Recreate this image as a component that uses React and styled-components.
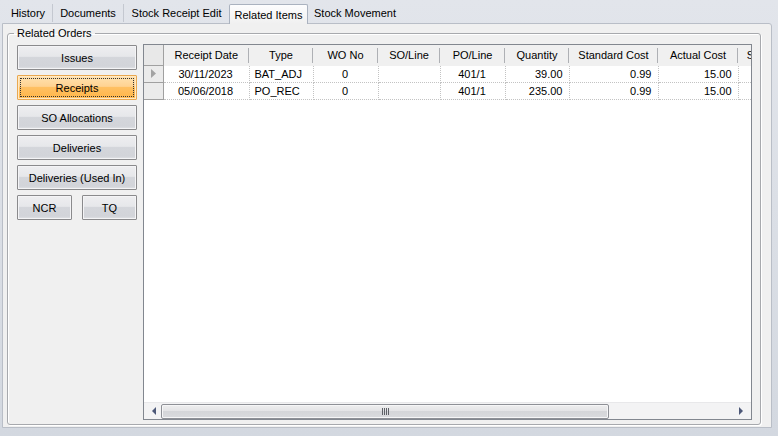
import React from "react";
import styled, { createGlobalStyle, css } from "styled-components";

const GlobalStyle = createGlobalStyle`
  body {
    margin: 0;
    font-family: "Liberation Sans", Arial, sans-serif;
    font-size: 11px;
    color: #000;
  }
`;

const Root = styled.div`
  width: 778px;
  height: 436px;
  display: flex;
  flex-direction: column;
  background: linear-gradient(#e2e5eb, #d3d8e0);
  overflow: hidden;
`;

const TabStrip = styled.div`
  height: 23px;
  display: flex;
  align-items: flex-end;
  padding-left: 4px;
`;

const Tab = styled.div`
  width: ${(p) => p.$w}px;
  height: 18px;
  margin-bottom: 1px;
  display: flex;
  align-items: center;
  justify-content: center;
  border-right: 1px solid #c4c8d0;
  box-sizing: border-box;
  white-space: nowrap;
  ${(p) =>
    p.$selected &&
    css`
      position: relative;
      z-index: 1;
      height: 20px;
      margin-bottom: -1px;
      padding-top: 1px;
      border: 1px solid #aab2bf;
      border-bottom: none;
      border-radius: 2px 2px 0 0;
      background: linear-gradient(#fdfdfe, #f0f0f0);
    `}
  ${(p) =>
    p.$last &&
    css`
      border-right: none;
    `}
`;

const TabPage = styled.div`
  flex: 1;
  margin: 0 6px 8px 2px;
  border: 1px solid #b9bec7;
  border-radius: 0 3px 0 0;
  background: #f0f0f0;
  display: flex;
  flex-direction: column;
`;

const Group = styled.fieldset`
  flex: 1;
  margin: 3px 10px 2px 4px;
  padding: 4px 8px 4px 9px;
  border: 1px solid #a7a9ad;
  border-radius: 3px;
  display: flex;
  min-width: 0;
  box-shadow: 1px 1px 0 #fff, inset 1px 1px 0 #fff;
`;

const Legend = styled.legend`
  padding: 0 3px;
  margin-left: -3px;
  line-height: 13px;
`;

const Sidebar = styled.div`
  width: 120px;
  flex-shrink: 0;
  padding-top: 1px;
  display: flex;
  flex-direction: column;
  gap: 5px;
`;

const ButtonRow = styled.div`
  display: flex;
  justify-content: space-between;
`;

const Button = styled.div`
  width: ${(p) => (p.$w ? `${p.$w}px` : "auto")};
  height: 25px;
  box-sizing: border-box;
  display: flex;
  align-items: center;
  justify-content: center;
  padding-top: 1px;
  border: 1px solid #8a8a8c;
  border-radius: 1px;
  background: linear-gradient(
    #eeeef0 0%,
    #e6e7ea 45%,
    #d4d6db 50%,
    #d2d4d9 88%,
    #e2e3e6 100%
  );
  box-shadow: inset 0 0 0 1px #f4f4f6;
  position: relative;
  ${(p) =>
    p.$active &&
    css`
      border-color: #e9a850;
      background: linear-gradient(
        #ffe2b0 0%,
        #ffd392 45%,
        #ffc062 50%,
        #ffb84e 88%,
        #ffc46a 100%
      );
      box-shadow: inset 0 0 0 1px #ffe9c4;
      &::after {
        content: "";
        position: absolute;
        inset: 2px;
        border: 1px dotted #333;
      }
    `}
`;

const Grid = styled.div`
  flex: 1;
  min-width: 0;
  margin-left: 6px;
  border: 1px solid #82878f;
  background: #fff;
  display: flex;
  flex-direction: column;
`;

const TableArea = styled.div`
  flex: 1;
  overflow: hidden;
`;

const Table = styled.table`
  table-layout: fixed;
  border-collapse: collapse;
  width: ${(p) => p.$w}px;
  font-size: 11px;
`;

const HeadCell = styled.th`
  height: 20px;
  padding: 0 4px;
  font-weight: normal;
  text-align: center;
  background: #f0f0f0;
  position: relative;
  white-space: nowrap;
  overflow: hidden;
  &::after {
    content: "";
    position: absolute;
    right: 0;
    top: 3px;
    bottom: 3px;
    width: 1px;
    background: #aeb0b4;
  }
`;

const CornerCell = styled.th`
  height: 20px;
  padding: 0;
  background: #e8e8e8;
  border-right: 1px solid #a0a0a0;
  border-bottom: 1px solid #a0a0a0;
`;

const RowHead = styled.td`
  height: 16px;
  padding: 0;
  background: #ebebeb;
  border-right: 1px solid #a0a0a0;
  border-bottom: 1px solid #a0a0a0;
  text-align: center;
  vertical-align: middle;
`;

const Cell = styled.td`
  height: 16px;
  padding: 0 6px 0 5px;
  text-align: ${(p) => p.$align};
  border-right: 1px dotted #c3c3c3;
  border-bottom: 1px dotted #c3c3c3;
  white-space: nowrap;
  overflow: hidden;
`;

const HScroll = styled.div`
  height: 17px;
  flex-shrink: 0;
  display: flex;
  align-items: center;
  padding: 0 4px 0 3px;
  background: #f3f3f4;
  border-top: 1px solid #e8e8ea;
  box-sizing: border-box;
`;

const Arrow = styled.div`
  width: 13px;
  display: flex;
  justify-content: center;
`;

const Track = styled.div`
  flex: 1;
  height: 15px;
  display: flex;
  padding-left: 1px;
`;

const Thumb = styled.div`
  width: 448px;
  box-sizing: border-box;
  border: 1px solid #8e9096;
  border-radius: 2px;
  background: linear-gradient(#eeeeef 0%, #e4e4e6 45%, #d5d6d9 50%, #d9dadd 100%);
  box-shadow: inset 0 0 0 1px #f6f6f7;
  display: flex;
  align-items: center;
  justify-content: center;
`;

const Grip = styled.div`
  width: 7px;
  height: 7px;
  background: repeating-linear-gradient(
    90deg,
    #5e6066 0 1px,
    transparent 1px 2px
  );
`;

const columns = [
  { key: "date", label: "Receipt Date", w: 86, align: "center" },
  { key: "type", label: "Type", w: 64, align: "left" },
  { key: "wo", label: "WO No", w: 65, align: "center" },
  { key: "so", label: "SO/Line", w: 62, align: "center" },
  { key: "po", label: "PO/Line", w: 65, align: "center" },
  { key: "qty", label: "Quantity", w: 64, align: "right" },
  { key: "std", label: "Standard Cost", w: 89, align: "right" },
  { key: "act", label: "Actual Cost", w: 80, align: "right" },
  { key: "sup", label: "Supplier", w: 58, align: "left" },
];

const rows = [
  { date: "30/11/2023", type: "BAT_ADJ", wo: "0", so: "", po: "401/1", qty: "39.00", std: "0.99", act: "15.00", sup: "" },
  { date: "05/06/2018", type: "PO_REC", wo: "0", so: "", po: "401/1", qty: "235.00", std: "0.99", act: "15.00", sup: "" },
];

const tabs = [
  { label: "History", w: 49 },
  { label: "Documents", w: 71 },
  { label: "Stock Receipt Edit", w: 105 },
  { label: "Related Items", w: 79, selected: true },
  { label: "Stock Movement", w: 94 },
];

const RowMarker = () => (
  <svg width="5" height="9" viewBox="0 0 5 9">
    <path d="M0 0 L5 4.5 L0 9 Z" fill="#a3a3a3" />
  </svg>
);

const ScrollArrow = ({ dir }) => (
  <svg width="4" height="8" viewBox="0 0 4 8">
    {dir === "left" ? (
      <path d="M4 0 L0 4 L4 8 Z" fill="#4d5878" />
    ) : (
      <path d="M0 0 L4 4 L0 8 Z" fill="#4d5878" />
    )}
  </svg>
);

export default function App() {
  const tableWidth = 19 + columns.reduce((s, c) => s + c.w, 0);
  return (
    <Root>
      <GlobalStyle />
      <TabStrip>
        {tabs.map((t, i) => (
          <Tab
            key={t.label}
            $w={t.w}
            $selected={t.selected}
            $last={i === tabs.length - 1 || tabs[i + 1]?.selected}
          >
            {t.label}
          </Tab>
        ))}
      </TabStrip>
      <TabPage>
        <Group>
          <Legend>Related Orders</Legend>
          <Sidebar>
            <Button>Issues</Button>
            <Button $active>Receipts</Button>
            <Button>SO Allocations</Button>
            <Button>Deliveries</Button>
            <Button>Deliveries (Used In)</Button>
            <ButtonRow>
              <Button $w={55}>NCR</Button>
              <Button $w={55}>TQ</Button>
            </ButtonRow>
          </Sidebar>
          <Grid>
            <TableArea>
              <Table $w={tableWidth}>
                <colgroup>
                  <col style={{ width: 19 }} />
                  {columns.map((c) => (
                    <col key={c.key} style={{ width: c.w }} />
                  ))}
                </colgroup>
                <thead>
                  <tr>
                    <CornerCell />
                    {columns.map((c) => (
                      <HeadCell key={c.key}>{c.label}</HeadCell>
                    ))}
                  </tr>
                </thead>
                <tbody>
                  {rows.map((r, i) => (
                    <tr key={i}>
                      <RowHead>{i === 0 && <RowMarker />}</RowHead>
                      {columns.map((c) => (
                        <Cell key={c.key} $align={c.align}>
                          {r[c.key]}
                        </Cell>
                      ))}
                    </tr>
                  ))}
                </tbody>
              </Table>
            </TableArea>
            <HScroll>
              <Arrow>
                <ScrollArrow dir="left" />
              </Arrow>
              <Track>
                <Thumb>
                  <Grip />
                </Thumb>
              </Track>
              <Arrow>
                <ScrollArrow dir="right" />
              </Arrow>
            </HScroll>
          </Grid>
        </Group>
      </TabPage>
    </Root>
  );
}
